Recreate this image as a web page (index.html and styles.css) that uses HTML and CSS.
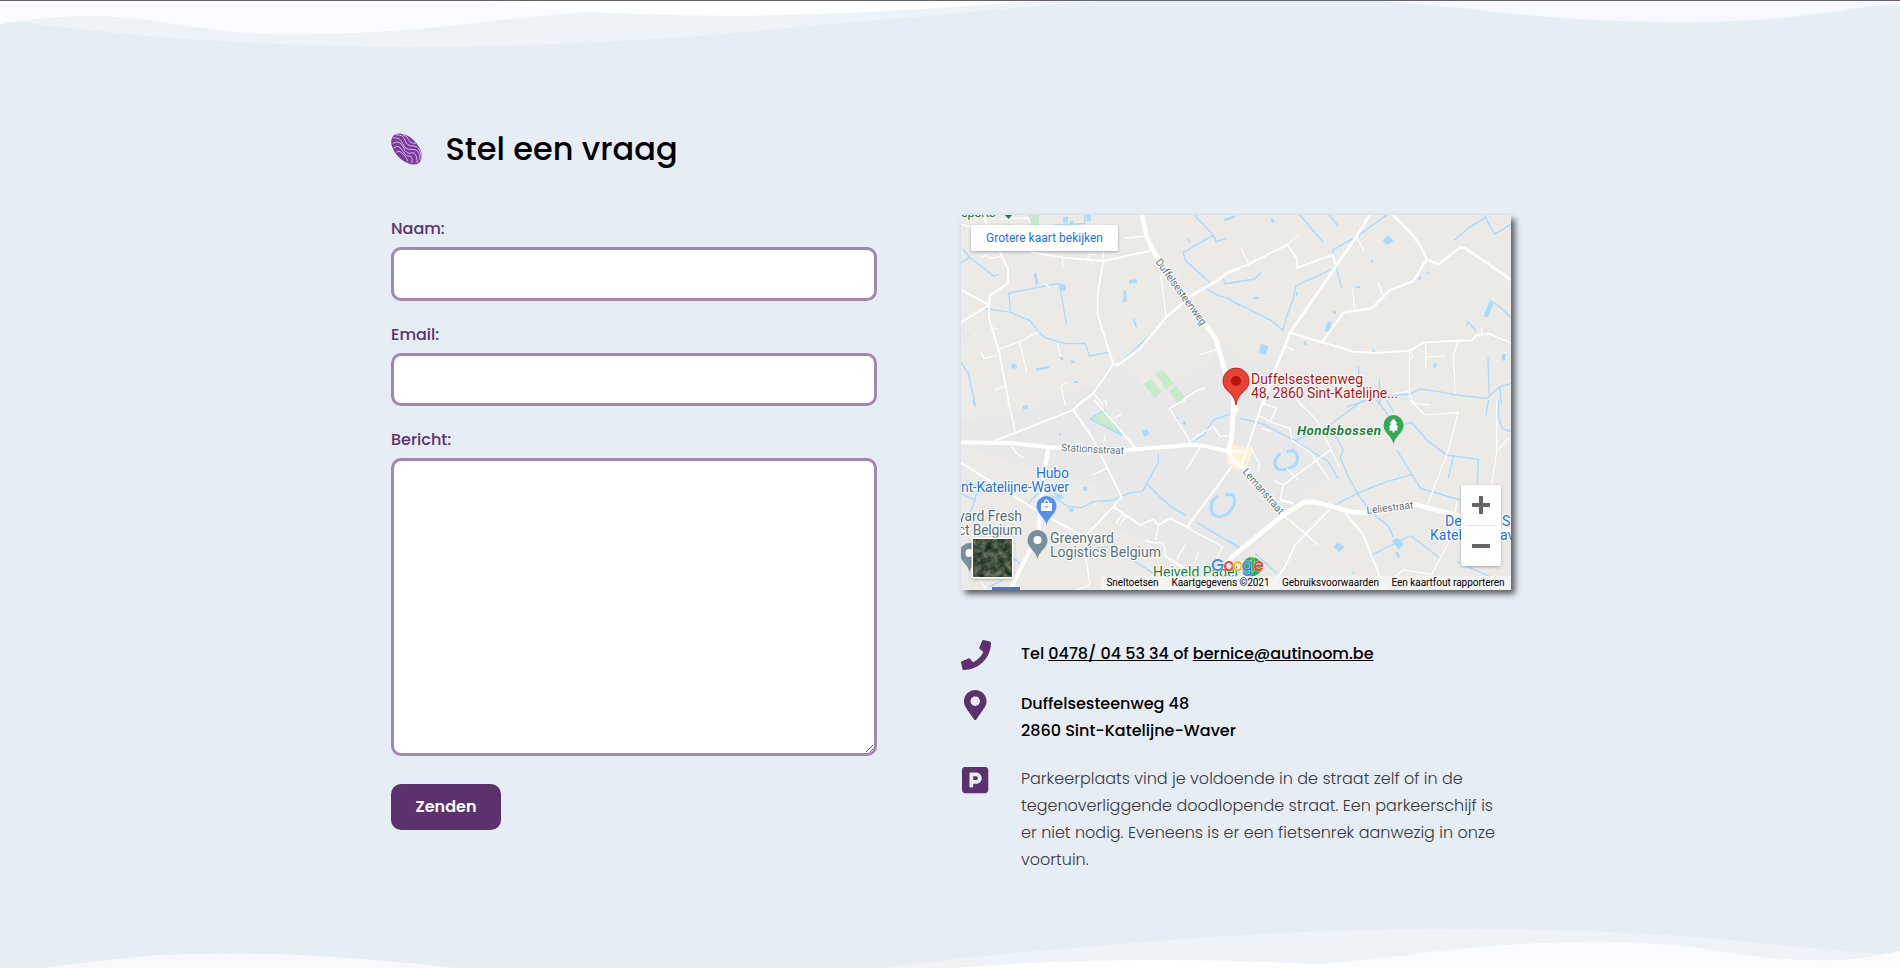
FILE: index.html
```html
<!DOCTYPE html>
<html lang="nl">
<head>
<meta charset="utf-8">
<title>Stel een vraag</title>
<link rel="stylesheet" href="styles.css">
</head>
<body>
<section class="contact">
  <svg class="wave wave-top" viewBox="0 0 1900 60" aria-hidden="true">
    <path fill="#edf3f7" d="M0 0V24Q10 22 20 22Q100 32 170 38Q300 47 430 47Q560 46 700 36Q830 24 950 14Q1040 5 1100 1V0ZM1370 0Q1440 6 1510 14Q1600 23 1680 23Q1770 22 1830 13Q1860 8 1885 5L1900 8V0Z"/>
    <path fill="#fafbfe" d="M0 0V24Q50 16 90 16Q130 16 180 25Q240 35 300 34.500Q370 34 440 27Q510 19 545 16Q570 13 590 12L600 0Z"/>
    <path fill="#fff" d="M470 0Q510 6 540 8Q565 11 590 12L650 14.500Q735 17 820 14Q900 11 950 7Q1010 3 1050 0Z"/>
    <path fill="#f7f9fe" d="M1375 0Q1450 6 1510 13.500Q1600 22 1680 22Q1760 22 1830 12Q1865 6 1900 3V0Z"/>
    <path fill="#65636c" d="M0 0H1900V1H0Z"/>
  </svg>

  <div class="container">
    <header class="title">
      <svg class="print" viewBox="0 0 32 32" aria-hidden="true">
        <g transform="rotate(46 15.500 16)">
          <ellipse cx="15.500" cy="16" rx="18.600" ry="11.300" fill="#7b3a9c"/>
          <g fill="none" stroke="#d5c3e3" stroke-width=".9">
            <path d="M-2 14Q2 8 8 11T18 9T32 11M-2 18Q3 12 9 15T20 12T33 14M2 22Q4 14 12 17T22 15T33 18M6 25Q6 18 14 20T23 18Q28 18 29 22M11 26Q10 22 17 22T25 24M2 9Q6 6 10 8T18 5"/>
          </g>
        </g>
      </svg>
      <h1>Stel een vraag</h1>
    </header>

    <div class="columns">
      <form class="form">
        <label for="naam">Naam:</label>
        <input id="naam" type="text">
        <label for="email">Email:</label>
        <input id="email" type="email">
        <label for="bericht">Bericht:</label>
        <textarea id="bericht"></textarea>
        <button type="button">Zenden</button>
      </form>

      <div class="info">
        <svg class="map" viewBox="0 0 550 375" role="img" aria-label="Kaart">
          <defs>
            <filter id="sh" x="-20%" y="-20%" width="140%" height="160%"><feDropShadow dx="0" dy="1" stdDeviation="1.500" flood-opacity=".3"/></filter>
            <filter id="sat" x="0" y="0" width="100%" height="100%" color-interpolation-filters="sRGB">
              <feTurbulence type="fractalNoise" baseFrequency=".16" numOctaves="4" seed="8"/>
              <feColorMatrix values=".65 0 0 0 -.06  .5 0 0 0 .07  .5 0 0 0 -.01  0 0 0 0 1"/>
            </filter>
          </defs>
          <rect width="550" height="375" fill="#ebeae7"/>
          <path fill="#e8e8e8" d="M152 149L172 156L188 181L200 170L246 150L262 125L285 150L305 142L325 150L350 190L375 225L380 255L350 275L320 305L300 325L280 350L250 372L200 335L150 310L135 270L100 265L30 240L0 232V205L50 200L90 185L130 172ZM300 140L325 143L318 160L300 157Z"/>
          <path fill="#fdf2d2" d="M265 232L272 230L292 234L286 253L276 255L266 248Z"/>

          <!-- north-west quarter -->
          <g transform="translate(-11 -10) scale(.33333)">
            <g fill="#c9ebcb"><path d="M237 30h30v32h-30zM581 538l22-17 33 40-22 19zM615 507l22-15 34 43-22 18zM656 559l22-17 27 34-20 18zM168 56h20v8h-20z"/></g>
            <g fill="#a8dbff"><path d="M339 38l15-4v16l-14 3zM410 30h12v18h-12zM252 206l8-2 5 34-8 2zM331 238l17 1-1 17-14 2zM537 224l24-1v11l-24 1zM522 258l6-4 2 37-11 0zM549 343l6 0 6 22-6 1zM186 477l12-1 3 12-12 4-5-6zM258 490l38-7 2 7-38 7zM330 456l8 0 2 10-7 1zM363 468l9-3 3 7-10 4zM370 530l14-3-1 6-11 3zM820 42l35-11 3 6-33 12z"/><circle cx="365" cy="53" r="6"/><circle cx="54" cy="392" r="3"/></g>
            <g fill="none" stroke="#a8dbff" stroke-width="4">
              <path d="M38 132L60 158L132 214L148 208M33 174L58 157M176 264L328 235L349 358M176 264L182 322L114 312L100 310M182 322L240 347L265 380L285 398L345 416L406 415L418 453L475 442M33 472L55 505L76 600M733 30L790 90L700 142L706 166L780 233M790 90L798 110L830 100M700 290L640 350L580 410L505 478M765 248L805 272L835 280L870 302M820 222L825 236L870 230M713 100L720 112M405 30V56M312 60L405 56"/>
            </g>
            <g fill="none" stroke="#fff" stroke-linejoin="round">
              <path stroke-width="3.500" d="M460 135V168M524 100L583 94M632 210L648 336M748 450L800 433M412 163L418 147L440 149M338 157V185M92 157L110 150L122 160L150 155M208 411L230 500M142 435L208 411L265 380M323 414L330 450L338 452M94 442L102 460L142 450M334 540L340 580L346 600M334 540L348 535M430 565L460 600M676 600L735 560L765 548M130 558L165 542M286 237L300 249M130 370L146 373M110 45L235 38L240 55M33 58L60 64"/>
              <path stroke-width="5.500" d="M100 30L110 60L145 130L174 192V235L118 273L117 340L147 440L178 600M33 255L118 300L33 352M240 141L340 158L460 168L600 138M460 168L443 265V330L490 478L430 565L385 600"/>
              <path stroke-width="8" d="M490 478H507L570 430L650 336L720 275L805 225L830 205L870 190"/>
              <path stroke-width="14" d="M575 25L590 95L608 135L700 275L760 350L797 400L820 480L850 580L859 620"/>
            </g>
          </g>
          <!-- north-east quarter -->
          <g transform="translate(269 -10) scale(.33333)">
            <g fill="#a8dbff"><path d="M458 105l18-14 14 17-17 11-9-5zM121 42l7-3 7 11-8 4zM92 416l24 7-10 27-19-6zM292 350l14 2-9 27-13 0zM777 291l13 5-17 42-12-5zM613 473l8 2-4 14-8-2zM817 446l11 1-4 21-9-2zM377 243h13v6h-13zM72 276h15v6H72zM221 409h8v10h-8z"/><circle cx="313" cy="323" r="5"/><circle cx="569" cy="220" r="5"/><circle cx="595" cy="203" r="3"/><circle cx="426" cy="168" r="4"/><circle cx="431" cy="438" r="4"/></g>
            <g fill="none" stroke="#a8dbff" stroke-width="4">
              <path d="M210 30L280 112M298 30L324 62M470 30L380 95L308 135L307 150M318 185L334 247M308 192L198 242L190 280L175 320L158 377L130 350L80 324L0 285M0 234L75 222L95 199M673 106L718 67L766 38L794 88L843 58M766 38V30M778 286L800 298L843 338M709 362L714 350L738 378M774 458L778 578M810 545L814 600M843 536L810 545L770 580L680 570L625 560L570 552L540 567L450 575L350 605M672 500L677 570M386 485V510M448 522L450 600M200 260V272"/>
            </g>
            <g fill="none" stroke="#fff" stroke-linejoin="round">
              <path stroke-width="3.500" d="M35 132L54 175M172 119L208 89M379 97L402 137M368 252L374 316M444 232L458 270M162 421L190 436M587 420V486M587 456L648 453M538 437V570L555 600M755 370V390M538 437L548 450L545 460L536 458M684 410L670 450L676 568M490 565L538 560M200 580L215 605"/>
              <path stroke-width="5.500" d="M278 412L370 440L440 444L540 437L580 413L680 407L725 407L740 390L780 387L843 414M0 200L54 178L172 119L200 160L202 188L308 149L318 183"/>
              <path stroke-width="7" d="M487 28L540 82L570 120L590 163L550 228L480 255L425 310L340 323L276 412L180 383M590 163L625 179L690 128L705 129L843 224"/>
              <path stroke-width="8" d="M421 28L379 95L318 183L180 383L133 500L98 600"/>
            </g>
          </g>
          <!-- south-west quarter -->
          <g transform="translate(-11 185) scale(.33333)">
            <path fill="#c9ebcb" d="M420 57L463 29L516 106ZM672 0h28l-18 8z"/>
            <g fill="#a8dbff"><path d="M219 17l15-3-2 13-14 1zM577 92l16-4 4 16-14 7zM311 278l25 7 4 11-20 0zM355 324l17 2-3 9-10 0z"/><circle cx="405" cy="267" r="7"/><circle cx="682" cy="55" r="4"/><circle cx="703" cy="69" r="5"/><circle cx="330" cy="102" r="4"/></g>
            <g fill="none" stroke="#a8dbff" stroke-width="4">
              <path d="M625 160V187L577 275L540 278L490 300L430 305L395 323L355 320L302 285M593 254L630 290L665 322L708 346M720 128L762 105L790 60L838 43M741 368L870 445M68 0L76 20M420 57L463 29L516 106ZM50 240L85 260L75 300L33 280M75 300L55 350M265 278L235 310M110 240L95 275M190 475L210 490M118 560L160 540M555 485L610 520M395 448L475 440"/>
              <path stroke-width="9" d="M804 289Q775 305 786 337Q805 363 838 337Q863 305 848 284L825 284"/>
            </g>
            <g fill="none" stroke="#fff" stroke-linejoin="round">
              <path stroke-width="3.500" d="M174 0L196 97M185 137Q195 160 220 174M473 205L427 224M750 142L711 206M658 25L715 115L720 128L745 105L790 80L810 110L835 107M706 0L658 25M498 370L515 345L528 350L508 375M617 420L625 375L650 358M620 430L585 422M620 430Q640 420 645 450Q640 480 715 510M640 465L700 500M705 435L680 478M745 455L735 490M720 388L818 440L800 475M405 455L420 555L380 570M410 400L407 450M90 540L110 570M465 0L470 20M466 108L460 130M490 55L515 43"/>
              <path stroke-width="5.500" d="M33 188L290 350L405 410L490 320M130 124L370 30L400 0M370 30L425 110L515 290L490 320M490 320L570 375L610 358L625 375L660 356L720 385M845 200L712 380M433 0L555 142"/>
              <path stroke-width="12" d="M33 127L190 130L300 142L525 150L720 135L760 137L835 155M295 142L280 230L265 400L235 460L180 570"/>
              <path stroke-width="9" d="M859 0L835 155L860 190L900 207M835 155H880"/>
              <path stroke-width="12" d="M845 475L780 540"/>
            </g>
          </g>
          <!-- south-east quarter -->
          <g transform="translate(269 185) scale(.33333)">
            <g fill="#a8dbff"><path d="M310 440l14-12 20 12-17 15zM485 423l15-10 22 17-15 20zM495 456l8 0 8 13-7 8zM365 518l10-4-5 8z"/></g>
            <g fill="none" stroke="#a8dbff" stroke-width="4">
              <path d="M30 55L100 72L190 120L293 183L325 237M400 0L300 75L190 125M300 75L340 150L330 170L355 230L382 280L410 318L440 350L475 378L490 412M315 315L382 280L470 245L545 224M440 0L500 80L545 67L590 120L650 165L745 178L742 255M500 150L572 265L690 300M670 168L655 235M425 465L490 432L542 407L628 473M680 485L780 530M775 0L768 45M805 0V50L817 85L843 95M0 425L30 442M75 460L140 520M470 0L490 35"/>
              <path stroke-width="9" d="M152 160Q125 180 140 205Q165 218 198 192Q210 165 190 152L170 155"/>
            </g>
            <g fill="none" stroke="#fff" stroke-linejoin="round">
              <path stroke-width="3.500" d="M540 0L585 45L685 38L655 150L595 310M835 115L800 155L785 255M550 10L600 15M800 0V155M200 0L260 60L330 205M100 10L140 25L120 65L180 85L185 120L240 155L298 240M300 150L160 255L130 240M160 255L150 300M85 45L120 65M60 140L88 190M88 190L85 215M170 205L205 240M160 345L265 435M680 310L655 430L605 523L520 510L495 530M95 85L125 95M0 150L50 155"/>
              <path stroke-width="5.500" d="M100 0L35 195M345 338L400 405L465 570M300 328L195 435L165 500L125 560M150 300L190 310"/>
              <path stroke-width="14" d="M0 475L160 345L220 308Q240 302 270 310L370 337H410M550 312L690 348L843 395M12 0L5 110L-5 155"/>
              <path stroke-width="10" d="M0 180L45 205L165 345"/>
            </g>
          </g>
          <path fill="#3b78d8" d="M31 372h28v3H31z"/>

          <!-- street names -->
          <g class="street">
            <text transform="translate(194 47) rotate(54)" textLength="79">Duffelsesteenweg</text>
            <text transform="translate(100 236) rotate(3)" textLength="63">Stationsstraat</text>
            <text transform="translate(281 257) rotate(49)" textLength="57">Lemanstraat</text>
            <text transform="translate(406 299) rotate(-7)" textLength="47">Leliestraat</text>
          </g>

          <!-- places -->
          <g class="place">
            <text class="green" x="0" y="2" textLength="35">sports</text>
            <text class="blue" x="75" y="263" textLength="33">Hubo</text>
            <text class="blue" x="0" y="277" textLength="108">nt-Katelijne-Waver</text>
            <text class="slate" x="-3" y="306" textLength="64">yard Fresh</text>
            <text class="slate" x="-3" y="320" textLength="64">ct Belgium</text>
            <text class="slate" x="89" y="328" textLength="64">Greenyard</text>
            <text class="slate" x="89" y="342" textLength="111">Logistics Belgium</text>
            <text class="green" x="192" y="362" textLength="85">Heiveld Padel</text>
            <text class="green bold" x="336" y="220" textLength="84">Hondsbossen</text>
            <text class="red" x="290" y="169" textLength="112">Duffelsesteenweg</text>
            <text class="red" x="290" y="183" textLength="147">48, 2860 Sint-Katelijne...</text>
            <text class="blue" x="484" y="311">De</text>
            <text class="blue" x="541" y="311">S</text>
            <text class="blue" x="469" y="325">Katel</text>
            <text class="blue" x="539" y="325">av</text>
          </g>
          <path d="M44 0h7l-3.500 4z" fill="#188038"/>

          <!-- markers -->
          <path fill="#ea4335" stroke="#b31412" stroke-width=".8" d="M275 190C273 176 262 177 262 166A13 13 0 0 1 288 166C288 177 277 176 275 190Z"/>
          <circle cx="275" cy="166" r="5" fill="#b31412"/>
          <g>
            <path fill="#34a853" d="M432.500 229C431 221 422.500 218 422.500 210A10 10 0 0 1 442.500 210C442.500 218 434 221 432.500 229Z"/>
            <path fill="#fff" d="M432.500 203.500l4 5h-2l3 4h-2l1.500 3h-3.500v2h-2v-2H428l1.500-3h-2l3-4h-2z"/>
            <path fill="#5491f5" d="M85.500 310C84 302 75.500 299 75.500 291A10 10 0 0 1 95.500 291C95.500 299 87 302 85.500 310Z"/>
            <path fill="#fff" d="M80 288h11v8H80z"/><path d="M83 288q2.500-6 5 0" fill="none" stroke="#fff" stroke-width="1.300"/><path d="M83.500 291q2 3 4 0" fill="none" stroke="#5491f5"/>
            <path fill="#78909c" d="M76.500 344C75 336 66.500 333 66.500 325A10 10 0 0 1 86.500 325C86.500 333 78 336 76.500 344ZM8.500 357C7 349 -1.500 346 -1.500 338A10 10 0 0 1 18.500 338C18.500 346 10 349 8.500 357Z"/>
            <circle cx="76.500" cy="325" r="4" fill="#fff"/><circle cx="8.500" cy="338" r="4" fill="#fff"/>
            <path fill="#34a853" d="M291 362C289 361 281 359 281 352A10 10 0 0 1 301 352C301 359 293 361 291 362Z"/>
          </g>
          <text class="google" y="356"><tspan x="250" fill="#4285f4">G</tspan><tspan x="262.500" fill="#ea4335">o</tspan><tspan x="271.500" fill="#fbbc04">o</tspan><tspan x="280.500" fill="#4285f4">g</tspan><tspan x="289.500" fill="#34a853">l</tspan><tspan x="292.500" fill="#ea4335">e</tspan></text>

          <!-- map controls -->
          <g filter="url(#sh)"><rect x="10" y="10" width="147" height="26" rx="2" fill="#fff"/></g>
          <text class="bigger" x="25" y="27" textLength="117">Grotere kaart bekijken</text>
          <g filter="url(#sh)"><rect x="10.500" y="322.500" width="42" height="41" rx="2" fill="#fff"/></g>
          <rect x="12.500" y="324.500" width="38" height="37" filter="url(#sat)"/>
          <g filter="url(#sh)"><rect x="500" y="270" width="40" height="81" rx="2" fill="#fff"/></g>
          <path stroke="#e6e6e6" d="M505 310.500h30"/>
          <path fill="#666" d="M511 288h7v-7h4v7h7v4h-7v7h-4v-7h-7zM511 329h18v4h-18z"/>
          <path fill="#f5f5f5" fill-opacity=".75" d="M140 361h410v14H140z"/>
          <g class="legal">
            <text x="145.500" y="371" textLength="52">Sneltoetsen</text>
            <text x="210.500" y="371" textLength="98">Kaartgegevens ©2021</text>
            <text x="321" y="371" textLength="97">Gebruiksvoorwaarden</text>
            <text x="430.500" y="371" textLength="113">Een kaartfout rapporteren</text>
          </g>
        </svg>

        <ul class="details">
          <li>
            <span class="icon"><svg viewBox="0 0 512 512"><path d="M493.400 24.600l-104-24c-11.300-2.600-22.900 3.300-27.500 13.900l-48 112c-4.200 9.800-1.400 21.300 6.900 28l60.600 49.600c-36 76.700-98.900 140.500-177.200 177.200l-49.600-60.600c-6.800-8.300-18.200-11.100-28-6.900l-112 48C3.900 366.500-2 378.100.6 389.400l24 104C27.100 504.200 36.700 512 48 512c256.100 0 464-207.500 464-464 0-11.200-7.700-20.900-18.600-23.400z"/></svg></span>
            <p class="strong">Tel <a href="#">0478/ 04 53 34 </a>of <a href="#">bernice@autinoom.be</a></p>
          </li>
          <li>
            <span class="icon"><svg viewBox="0 0 384 512"><path d="M172.268 501.670C26.970 291.031 0 269.413 0 192 0 85.961 85.961 0 192 0s192 85.961 192 192c0 77.413-26.970 99.031-172.268 309.670-9.535 13.774-29.930 13.773-39.464 0zM192 272c44.183 0 80-35.817 80-80s-35.817-80-80-80-80 35.817-80 80 35.817 80 80 80z"/></svg></span>
            <p class="strong">Duffelsesteenweg 48<br>2860 Sint-Katelijne-Waver</p>
          </li>
          <li>
            <span class="icon"><svg viewBox="0 0 448 512"><path d="M400 32H48C21.500 32 0 53.500 0 80v352c0 26.500 21.500 48 48 48h352c26.500 0 48-21.500 48-48V80c0-26.500-21.500-48-48-48zM240 320h-48v48c0 8.800-7.200 16-16 16h-32c-8.800 0-16-7.200-16-16V144c0-8.800 7.200-16 16-16h96c52.900 0 96 43.100 96 96s-43.100 96-96 96zm0-128h-48v64h48c17.600 0 32-14.400 32-32s-14.400-32-32-32z"/></svg></span>
            <p class="parking">Parkeerplaats vind je voldoende in de straat zelf of in de tegenoverliggende doodlopende straat. Een parkeerschijf is er niet nodig. Eveneens is er een fietsenrek aanwezig in onze voortuin.</p>
          </li>
        </ul>
      </div>
    </div>
  </div>

  <svg class="wave wave-bottom" viewBox="0 0 1900 60" aria-hidden="true">
    <path fill="#edf3f7" d="M878 60Q1000 45 1100 38Q1270 21 1460 21Q1620 21 1750 34Q1830 42 1880 46L1900 43V60Z"/>
    <path fill="#f7f9fe" d="M42 60Q100 52 160 47Q230 44 300 47Q390 52 455 60Z"/>
    <path fill="#fafbfe" d="M1300 57Q1340 55 1400 48Q1500 34 1600 33.500Q1670 34 1730 45Q1790 54 1840 52Q1870 50 1900 43V60H1300Z"/>
    <path fill="#fff" d="M955 60Q1050 52 1160 52Q1240 52 1310 56Q1340 57 1360 60Z"/>
  </svg>
</section>
</body>
</html>
```

FILE: styles.css
```css
* { box-sizing: border-box; }

body {
  margin: 0;
  font-family: Poppins, Inter, sans-serif;
  font-size: 16px;
  line-height: 27px;
  color: #000;
}

.contact {
  display: flex;
  flex-direction: column;
  height: 968px;
  overflow: hidden;
  background: #e6edf5;
}

.wave { display: block; flex: none; width: 100%; height: 60px; }
.wave-bottom { margin-top: auto; }

.container {
  width: 1120px;
  margin: 64px auto 0 391px;
}

.title {
  display: flex;
  align-items: flex-start;
  gap: 22.5px;
  height: 91px;
}
.print { width: 32px; height: 32px; margin-top: 9px; }
h1 {
  margin: 1px 0 0;
  font-size: 32px;
  font-weight: 500;
  line-height: 48px;
}

.columns {
  display: grid;
  grid-template-columns: 486px 550px;
  gap: 84px;
  align-items: start;
}

.form { display: flex; flex-direction: column; align-items: stretch; }
.form label {
  height: 32px;
  color: #5b326d;
  font-weight: 500;
}
.form input,
.form textarea {
  width: 100%;
  height: 53.6px;
  margin: 0 0 20px;
  border: 3px solid #a586af;
  border-radius: 10px;
  background: #fff;
  outline: none;
}
.form textarea { height: 297.8px; margin-bottom: 28px; resize: both; }
.form button {
  align-self: flex-start;
  width: 110px;
  height: 46px;
  padding: 0 0 1px;
  border: 0;
  border-radius: 10px;
  background: #5b326d;
  color: #fff;
  font: 600 16px/27px Poppins, Inter, sans-serif;
}

.map {
  display: block;
  width: 550px;
  height: 375px;
  box-shadow: 4px 4px 6px rgba(0, 0, 0, .6);
  font-family: Roboto, sans-serif;
}
.street text { font-size: 10.5px; fill: #5f6f78; stroke: #fff; stroke-width: 2px; paint-order: stroke; }
.place text { font-size: 14px; stroke: #fff; stroke-width: 2px; paint-order: stroke; }
.place .green { fill: #188038; }
.place .blue { fill: #1a73e8; }
.place .slate { fill: #546e7a; }
.place .red { fill: #b31412; }
.place .bold { font-size: 13.5px; font-weight: 700; font-style: italic; }
.google { font: 500 17px Poppins, sans-serif; stroke: rgba(255, 255, 255, .7); stroke-width: 1px; paint-order: stroke; }
.bigger { font-size: 12px; fill: #1a73e8; }
.legal text { font-size: 10px; fill: #000; }

.details {
  display: flex;
  flex-direction: column;
  margin: 50px 0 0;
  padding: 0;
  list-style: none;
}
.details li { display: flex; align-items: flex-start; }
.details li:nth-child(1) { height: 50px; }
.details li:nth-child(2) { height: 75px; }
.icon { display: flex; flex: none; justify-content: center; width: 29px; margin-right: 31px; }
.icon svg { display: block; flex: none; height: 30px; fill: #5b326d; }
.details p { margin: 0; }
.details a { color: inherit; white-space: pre-wrap; }
.strong { font-weight: 500; }
.parking { color: #3a3a3c; font-weight: 300; }
```
